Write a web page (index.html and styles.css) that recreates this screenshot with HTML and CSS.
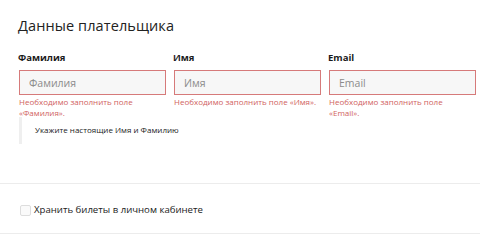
FILE: index.html
```html
<!DOCTYPE html>
<html lang="ru">
<head>
<meta charset="utf-8">
<link rel="stylesheet" href="styles.css">
</head>
<body>
<div class="page">
  <section class="payer">
    <h2 class="title">Данные плательщика</h2>
    <div class="fields">
      <div class="field">
        <label class="label">Фамилия</label>
        <input class="input" type="text" placeholder="Фамилия">
        <div class="error">Необходимо заполнить поле «Фамилия».</div>
      </div>
      <div class="field">
        <label class="label">Имя</label>
        <input class="input" type="text" placeholder="Имя">
        <div class="error">Необходимо заполнить поле «Имя».</div>
      </div>
      <div class="field">
        <label class="label">Email</label>
        <input class="input" type="text" placeholder="Email">
        <div class="error">Необходимо заполнить поле «Email».</div>
      </div>
    </div>
    <div class="hint">Укажите настоящие Имя и Фамилию</div>
  </section>
  <section class="store">
    <label class="check"><span class="box"></span><span class="check-text">Хранить билеты в личном кабинете</span></label>
  </section>
</div>
</body>
</html>
```
FILE: styles.css
```css
* { box-sizing: border-box; }
html, body { margin: 0; padding: 0; background: #fff; }
body { font-family: "Open Sans", "Noto Sans", sans-serif; color: #222; width: 480px; height: 236px; overflow: hidden; }
.payer { padding: 17px 4px 0 18px; height: 184px; border-bottom: 1px solid #ececec; }
.title { margin: 0; font-size: 14.5px; font-weight: 400; line-height: 18px; color: #222; letter-spacing: 0.1px; }
.fields { display: grid; grid-template-columns: 147px 147px 147px; column-gap: 8px; margin-top: 17px; margin-left: 1px; }
.field { display: flex; flex-direction: column; min-width: 0; }
.label { font-size: 9.5px; font-weight: 700; line-height: 12px; color: #1a1a1a; margin-left: -1px; }
.input { margin-top: 6px; height: 25px; border: 1.5px solid #d67a7a; background: #f7f7f7; padding: 0 9px; font-family: inherit; font-size: 10.5px; color: #333; outline: none; width: 100%; }
.input::placeholder { color: #8c8c8c; }
.error { margin-top: 1px; padding-right: 3px; font-size: 8px; line-height: 11px; color: #d0625e; }
.hint { margin-top: -1px; margin-left: 1px; border-left: 3px solid #efefef; padding: 7px 0 9px 13px; font-size: 8px; line-height: 11px; color: #222; }
.store { height: 50px; border-bottom: 1px solid #ececec; padding: 19px 0 0 20px; }
.check { display: flex; align-items: center; gap: 3px; }
.box { width: 11px; height: 11px; border: 1px solid #ddd; border-radius: 2px; background: #fafafa; }
.check-text { font-size: 9.6px; line-height: 14px; color: #222; }
```
